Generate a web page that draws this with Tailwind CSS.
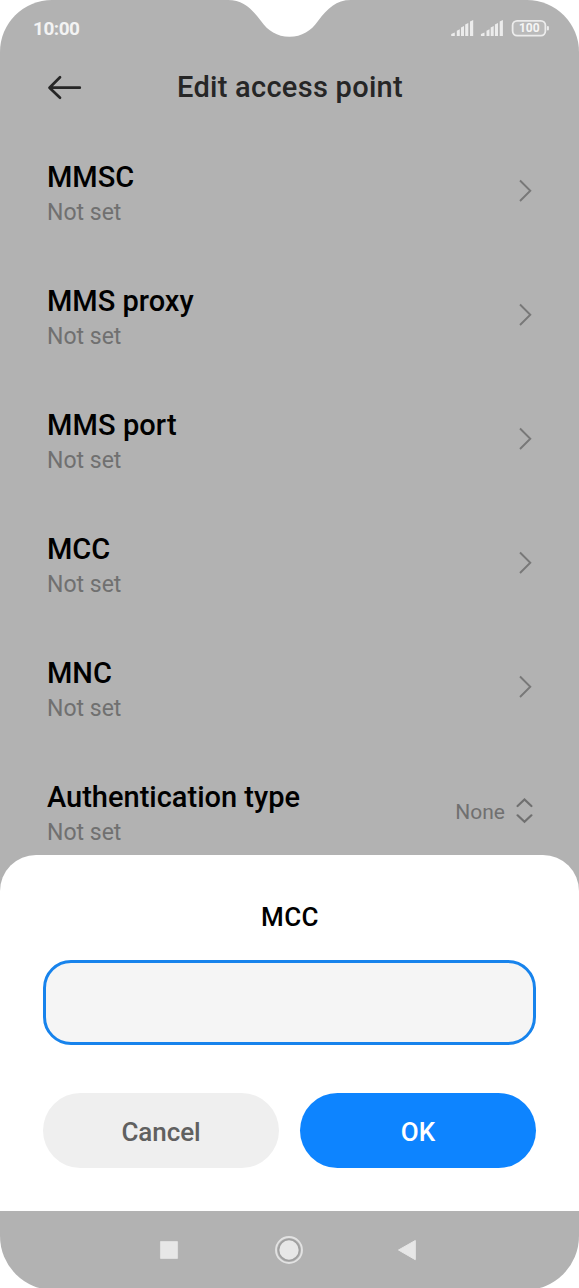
<!DOCTYPE html>
<html lang="en">
<head>
<meta charset="utf-8">
<title>Edit access point</title>
<script src="https://cdn.jsdelivr.net/npm/@tailwindcss/browser@4"></script>
</head>
<body class="bg-white font-['Roboto',sans-serif]">
<div class="h-[1288px] w-[579px] overflow-hidden">
<div class="relative flex h-[1290px] w-[579px] flex-col overflow-hidden rounded-t-[52px] rounded-b-[54px] bg-[#b2b2b2]">
  <svg class="absolute left-[224px] top-0" width="132" height="38" viewBox="0 0 132 38" fill="#fff"><path d="M4 0C19 0 27 8 37 21C44 31 53 36.700 65.500 36.700C78 36.700 87 31 94 21C104 8 112 0 127 0Z"/></svg>

  <header class="flex h-14 shrink-0 items-center justify-between pl-[33px] pr-[29px]">
    <span class="mt-px text-[19px] font-bold leading-6 tracking-[-0.5px] text-[#f3f3f3]">10:00</span>
    <svg width="100" height="20" viewBox="0 0 100 20" fill="#ececec">
      <g id="signal"><path d="M1.200 16L4.800 14.400V18H1.200ZM6.800 12.700L9.800 11.300V18H6.800ZM11 9.500L14 8V18H11ZM15.200 6.500L18.300 5V18H15.200ZM20 3.500L23.200 2V18H20Z"/></g>
      <use href="#signal" x="29.700"/>
      <rect x="62.600" y="2.800" width="32.800" height="14.800" rx="4.500" fill="#bababa" stroke="#ececec" stroke-width="1.800"/>
      <rect x="96.900" y="8" width="2" height="4.500" rx="1"/>
      <text x="79.300" y="14.300" text-anchor="middle" textLength="20.500" font-size="12" font-weight="700" fill="#f5f5f5">100</text>
    </svg>
  </header>

  <div class="flex h-[73px] shrink-0 items-start pl-[47px] pt-3">
    <svg class="mt-1.5" width="36" height="28" viewBox="0 0 36 28" fill="none" stroke="#262626" stroke-width="2.700" stroke-linecap="round" stroke-linejoin="round"><path d="M32.800 13.700H2.800M13 3.300L2.500 13.700L13 23.800"/></svg>
    <h1 class="ml-[94px] mt-px text-[29px] font-medium leading-9 tracking-[0.28px] text-[#262626]">Edit access point</h1>
  </div>

  <main class="h-[726px] shrink-0 overflow-hidden">
    <section class="flex h-[124px] justify-between pl-[47px] pr-[45px] pt-[30px]">
      <div><h2 class="text-[29px] font-medium leading-9 text-black">MMSC</h2><p class="text-[23px] leading-9 text-[#707070]">Not set</p></div>
      <svg class="mt-[19px]" width="16" height="26" viewBox="0 0 16 26" fill="none" stroke="#787878" stroke-width="1.900"><path d="M2 2.500L12.300 12.700L2 23"/></svg>
    </section>
    <section class="flex h-[124px] justify-between pl-[47px] pr-[45px] pt-[30px]">
      <div><h2 class="text-[29px] font-medium leading-9 text-black">MMS proxy</h2><p class="text-[23px] leading-9 text-[#707070]">Not set</p></div>
      <svg class="mt-[19px]" width="16" height="26" viewBox="0 0 16 26" fill="none" stroke="#787878" stroke-width="1.900"><path d="M2 2.500L12.300 12.700L2 23"/></svg>
    </section>
    <section class="flex h-[124px] justify-between pl-[47px] pr-[45px] pt-[30px]">
      <div><h2 class="text-[29px] font-medium leading-9 tracking-[0.1px] text-black">MMS port</h2><p class="text-[23px] leading-9 text-[#707070]">Not set</p></div>
      <svg class="mt-[19px]" width="16" height="26" viewBox="0 0 16 26" fill="none" stroke="#787878" stroke-width="1.900"><path d="M2 2.500L12.300 12.700L2 23"/></svg>
    </section>
    <section class="flex h-[124px] justify-between pl-[47px] pr-[45px] pt-[30px]">
      <div><h2 class="text-[29px] font-medium leading-9 text-black">MCC</h2><p class="text-[23px] leading-9 text-[#707070]">Not set</p></div>
      <svg class="mt-[19px]" width="16" height="26" viewBox="0 0 16 26" fill="none" stroke="#787878" stroke-width="1.900"><path d="M2 2.500L12.300 12.700L2 23"/></svg>
    </section>
    <section class="flex h-[124px] justify-between pl-[47px] pr-[45px] pt-[30px]">
      <div><h2 class="text-[29px] font-medium leading-9 text-black">MNC</h2><p class="text-[23px] leading-9 text-[#707070]">Not set</p></div>
      <svg class="mt-[19px]" width="16" height="26" viewBox="0 0 16 26" fill="none" stroke="#787878" stroke-width="1.900"><path d="M2 2.500L12.300 12.700L2 23"/></svg>
    </section>
    <section class="flex h-[124px] justify-between pl-[47px] pr-[45px] pt-[30px]">
      <div><h2 class="text-[29px] font-medium leading-9 text-black">Authentication type</h2><p class="text-[23px] leading-9 text-[#707070]">Not set</p></div>
      <div class="mt-[17px] flex h-8 items-center gap-[9px]">
        <span class="text-[21px] leading-8 text-[#707070]">None</span>
        <svg width="20" height="28" viewBox="0 0 20 28" fill="none" stroke="#707070" stroke-width="2.200" stroke-linecap="round"><path d="M3.600 8L10.500 1.500L17.400 8M3.600 17.300L10.500 23.800L17.400 17.300"/></svg>
      </div>
    </section>
  </main>

  <div class="h-[356px] shrink-0 rounded-t-[36px] bg-white px-[43px] pt-11">
    <h2 class="pl-px text-center text-[26px] font-medium leading-9 tracking-[0.4px] text-black">MCC</h2>
    <input aria-label="MCC" class="mt-[25px] block h-[85px] w-full rounded-[28px] border-3 border-[#1783ec] bg-[#f5f5f5] px-6 text-2xl outline-none">
    <div class="mt-12 flex gap-[21px]">
      <button class="h-[75px] flex-1 rounded-full bg-[#efefef] pt-[3px] text-[26px] font-medium tracking-[-0.1px] text-[#606060]">Cancel</button>
      <button class="h-[75px] flex-1 rounded-full bg-[#0d84ff] pt-[3px] text-[26px] font-medium text-white">OK</button>
    </div>
  </div>

  <nav class="flex flex-1 items-center pb-0.5 pl-[159px]">
    <svg width="20" height="20" viewBox="0 0 20 20"><rect x="0.700" y="0.700" width="18.600" height="18.600" rx="1" fill="#e7e7e7" stroke="#a5a5a5" stroke-width=".6"/></svg>
    <svg class="ml-[95px]" width="30" height="30" viewBox="0 0 30 30"><circle cx="15" cy="15" r="13" fill="#b2b2b2" stroke="#e2e2e2" stroke-width="1.900"/><circle cx="15" cy="15" r="10.400" fill="#e7e7e7" stroke="#a0a0a0" stroke-width="1.500"/></svg>
    <svg class="ml-[92px]" width="22" height="24" viewBox="0 0 22 24"><path d="M2.500 12L19.300 2.500V21.700Z" fill="#e7e7e7" stroke="#e7e7e7" stroke-width="1" stroke-linejoin="round"/></svg>
  </nav>
</div>
</div>
</body>
</html>
